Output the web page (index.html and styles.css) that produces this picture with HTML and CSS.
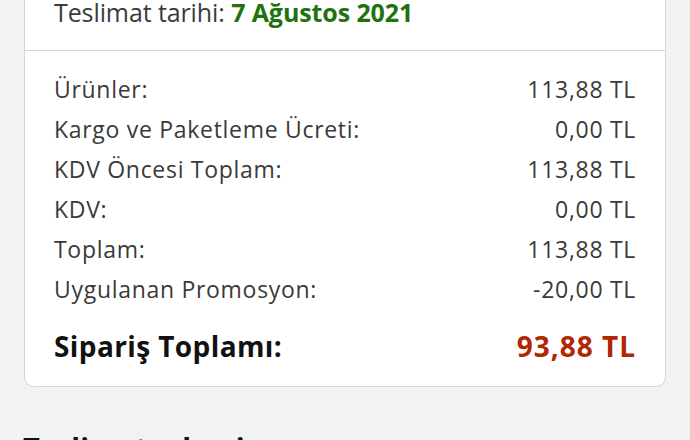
FILE: index.html
```html
<!DOCTYPE html>
<html lang="tr">
<head>
<meta charset="utf-8">
<link rel="stylesheet" href="styles.css">
</head>
<body>
<div class="card">
  <div class="delivery">Teslimat tarihi: <span class="date">7 Ağustos 2021</span></div>
  <div class="summary">
    <div class="row"><span>Ürünler:</span><span>113,88 TL</span></div>
    <div class="row"><span>Kargo ve Paketleme Ücreti:</span><span>0,00 TL</span></div>
    <div class="row"><span>KDV Öncesi Toplam:</span><span>113,88 TL</span></div>
    <div class="row"><span>KDV:</span><span>0,00 TL</span></div>
    <div class="row"><span>Toplam:</span><span>113,88 TL</span></div>
    <div class="row"><span>Uygulanan Promosyon:</span><span>-20,00 TL</span></div>
    <div class="row total"><span>Sipariş Toplamı:</span><span class="price">93,88 TL</span></div>
  </div>
</div>
<h2 class="section-title">Teslimat adresi</h2>
</body>
</html>
```

FILE: styles.css
```css
html, body {
  margin: 0;
  padding: 0;
  background: #f2f2f2;
  font-family: "Open Sans", "Noto Sans", sans-serif;
  color: #3a3a3a;
}

.card {
  margin: -30px 24px 0;
  background: #fff;
  border: 1px solid #d3d6d6;
  border-radius: 10px;
}

.delivery {
  padding: 26px 29px 23px;
  font-size: 25px;
  line-height: 30px;
  letter-spacing: -0.1px;
  color: #3b3b3b;
}

.date {
  font-weight: bold;
  color: #21720f;
}

.summary {
  border-top: 1px solid #d3d6d6;
  padding: 18px 29px 20px;
}

.row {
  display: flex;
  justify-content: space-between;
  font-size: 23px;
  line-height: 40px;
  letter-spacing: 0.7px;
}

.row.total {
  margin-top: 17px;
  font-size: 28px;
  font-weight: bold;
  letter-spacing: 0.4px;
  color: #111;
}

.price {
  color: #b12704;
  letter-spacing: 1px;
}

.section-title {
  margin: 41px 0 0 23px;
  font-size: 29px;
  font-weight: bold;
  color: #111;
}
```
